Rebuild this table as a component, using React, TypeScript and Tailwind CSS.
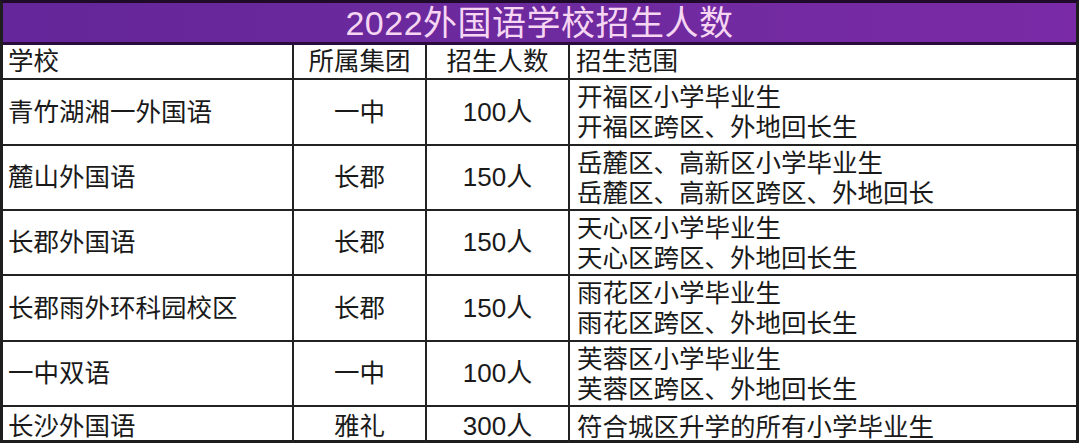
const rows = [
  { school: '青竹湖湘一外国语', group: '一中', count: '100人', scope: ['开福区小学毕业生', '开福区跨区、外地回长生'], h: 'h-[66px]' },
  { school: '麓山外国语', group: '长郡', count: '150人', scope: ['岳麓区、高新区小学毕业生', '岳麓区、高新区跨区、外地回长'], h: 'h-[65px]' },
  { school: '长郡外国语', group: '长郡', count: '150人', scope: ['天心区小学毕业生', '天心区跨区、外地回长生'], h: 'h-[65px]' },
  { school: '长郡雨外环科园校区', group: '长郡', count: '150人', scope: ['雨花区小学毕业生', '雨花区跨区、外地回长生'], h: 'h-[66px]' },
  { school: '一中双语', group: '一中', count: '100人', scope: ['芙蓉区小学毕业生', '芙蓉区跨区、外地回长生'], h: 'h-[65px]' },
  { school: '长沙外国语', group: '雅礼', count: '300人', scope: ['符合城区升学的所有小学毕业生'], h: 'h-[33px]', last: true },
];

const font = "font-['Liberation_Sans','Noto_Sans_CJK_SC',sans-serif]";

export default function App() {
  return (
    <div className={`w-[1080px] h-[443px] bg-white text-[#1a1a1a] ${font}`}>
      <div className="w-[1079px] border-[3px] border-[#1e1e1e] border-t-[#1f0a2a]">
        {/* Title */}
        <div className="h-[42px] bg-gradient-to-r from-[#64269a] via-[#6d2a9e] to-[#7a2aa6] border-b-[3px] border-[#2a0c3a] flex items-center justify-center">
          <span className="text-[34px] leading-none text-[#f6d6f2] tracking-[0.5px]">2022外国语学校招生人数</span>
        </div>

        {/* Header row */}
        <div className="grid grid-cols-[291px_133px_143px_1fr] h-[35px] border-b-2 border-[#222] text-[25.5px] leading-none">
          <div className="border-r-2 border-[#222] flex items-center pl-[5px]">学校</div>
          <div className="border-r-2 border-[#222] flex items-center justify-center">所属集团</div>
          <div className="border-r-2 border-[#222] flex items-center justify-center">招生人数</div>
          <div className="flex items-center pl-[6px]">招生范围</div>
        </div>

        {/* Body rows */}
        {rows.map((r) => (
          <div
            key={r.school}
            className={`grid grid-cols-[291px_133px_143px_1fr] ${r.h} ${r.last ? '' : 'border-b-2 border-[#222]'} text-[25.5px]`}
          >
            <div className="border-r-2 border-[#222] flex items-center pl-[5px]">{r.school}</div>
            <div className="border-r-2 border-[#222] flex items-center justify-center">{r.group}</div>
            <div className="border-r-2 border-[#222] flex items-center justify-center text-[26px]">{r.count}</div>
            <div className="flex flex-col justify-center pl-[7px] leading-[30px]">
              {r.scope.map((s) => (
                <span key={s}>{s}</span>
              ))}
            </div>
          </div>
        ))}
      </div>
    </div>
  );
}
